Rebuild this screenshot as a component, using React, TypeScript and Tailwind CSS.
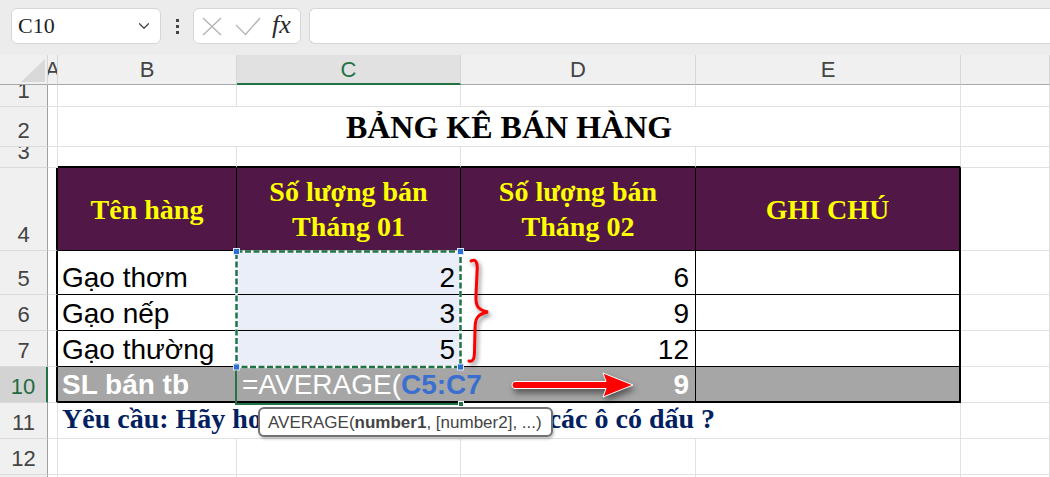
import { ChevronDown } from 'lucide-react'

const SANS = "font-['Liberation_Sans',Arial,sans-serif]"
const SERIF = "font-['Liberation_Serif','Times_New_Roman',serif]"

const COLS = 'grid grid-cols-[48px_10px_179px_224px_235px_265px_1fr]'

// cell styles
const GL = 'border-r border-b border-[#e1e1e1] bg-white'
const RH = `flex items-end justify-center pb-[4px] bg-[#f0f0f0] border-r border-r-[#a0a0a0] border-b border-b-[#dadada] text-[22px] leading-none text-[#444] overflow-hidden ${SANS}`
const RH_ACTIVE = `flex items-end justify-center pb-[4px] bg-[#d3d3d3] border-r-2 border-r-[#217346] border-b border-b-[#dadada] text-[22px] leading-none text-[#1e6b41] overflow-hidden ${SANS}`
const A_TBL = 'border-r-2 border-r-black border-b border-b-[#e1e1e1] bg-white'
const TOP_EDGE = 'border-r border-r-[#e1e1e1] border-b-2 border-b-black bg-white'
const HEAD = `flex flex-col items-center justify-center border-r border-b border-black bg-[#501747] text-[#ffff00] font-bold text-[28px] leading-[35px] ${SERIF}`
const HEAD_E = `flex flex-col items-center justify-center border-r-2 border-b border-black bg-[#501747] text-[#ffff00] font-bold text-[28px] leading-[35px] ${SERIF}`
const DATA = `flex items-end border-r border-b border-black bg-white text-[28px] leading-none pb-[2px] text-black whitespace-nowrap ${SANS}`
const DATA_SEL = `flex items-end justify-end border-r border-b border-black bg-[#e9eef8] text-[28px] leading-none pb-[2px] pr-[5px] text-black ${SANS}`
const DATA_E = 'border-r-2 border-b border-black bg-white'
const TOT = `flex items-end border-r border-b-2 border-black bg-[#a6a6a6] text-[28px] leading-none pb-[2px] text-white font-bold whitespace-nowrap ${SANS}`
const TOT_E = 'border-r-2 border-b-2 border-black bg-[#a6a6a6]'

function Blank({ n }: { n: number }) {
  return (
    <>
      {Array.from({ length: n }).map((_, i) => (
        <div key={i} className={GL} />
      ))}
    </>
  )
}

function TopBar() {
  return (
    <div className="h-[55px] bg-[#ececec] flex items-start pt-[8px] pl-[11px]">
      <div className="w-[150px] h-[36px] bg-white rounded-[6px] border border-[#d6d6d6] flex items-center justify-between pl-[6px] pr-[7px]">
        <span className={`${SERIF} text-[22px] text-[#222] leading-none`}>C10</span>
        <ChevronDown size={18} strokeWidth={1.6} className="text-[#444]" />
      </div>
      <div className="w-[32px] h-[36px] flex flex-col items-center justify-center gap-[3px]">
        <span className="w-[3px] h-[3px] bg-[#444]" />
        <span className="w-[3px] h-[3px] bg-[#444]" />
        <span className="w-[3px] h-[3px] bg-[#444]" />
      </div>
      <div className="w-[108px] h-[36px] bg-white rounded-[6px] border border-[#d6d6d6] flex items-center pl-[8px]">
        <svg width="20" height="19" viewBox="0 0 20 19" className="shrink-0">
          <path d="M1 1 L19 18 M19 1 L1 18" stroke="#b5b5b5" strokeWidth="1.4" fill="none" />
        </svg>
        <svg width="26" height="19" viewBox="0 0 26 19" className="ml-[13px] shrink-0">
          <path d="M1 8 L10.5 17.5 L25 1" stroke="#b5b5b5" strokeWidth="1.4" fill="none" />
        </svg>
        <span className={`${SERIF} italic text-[26px] leading-none text-[#2a2a2a] ml-[11px] pb-[3px]`}>fx</span>
      </div>
      <div className="ml-[8px] flex-1 h-[36px] bg-white rounded-l-[6px] border border-r-0 border-[#d6d6d6]" />
    </div>
  )
}

function ColHeaders() {
  const base = `flex items-center justify-center bg-[#f0f0f0] border-r border-r-[#d6d6d6] border-b border-b-[#a8a8a8] text-[22px] text-[#444] overflow-hidden ${SANS}`
  return (
    <>
      <div className="relative bg-[#f0f0f0] border-r border-r-[#d6d6d6] border-b border-b-[#a8a8a8]">
        <svg width="24" height="23" viewBox="0 0 24 23" className="absolute right-[2px] bottom-[2px]">
          <polygon points="24,0 24,23 0,23" fill="#d9d9d9" />
        </svg>
      </div>
      <div className={base}>A</div>
      <div className={base}>B</div>
      <div className={`flex items-center justify-center bg-[#e1e1e1] border-r border-r-[#d6d6d6] border-b-2 border-b-[#217346] text-[22px] text-[#217346] ${SANS}`}>C</div>
      <div className={base}>D</div>
      <div className={base}>E</div>
      <div className={base} />
    </>
  )
}

export default function App() {
  return (
    <div className="relative w-[1050px] h-[477px] overflow-hidden bg-white">
      <TopBar />
      <div className={`${COLS} grid-rows-[30px_22px_40px_21px_83px_44px_36px_36px_36px_36px_36px_20px]`}>
        <ColHeaders />

        {/* row 1 */}
        <div className={RH}>1</div>
        <Blank n={6} />

        {/* row 2 - title */}
        <div className={RH}>2</div>
        <div className={GL} />
        <div className={`col-span-4 flex items-end justify-center pb-[3px] border-r border-b border-[#e1e1e1] bg-white text-[32px] leading-none font-bold text-black ${SERIF}`}>
          BẢNG KÊ BÁN HÀNG
        </div>
        <div className={GL} />

        {/* row 3 */}
        <div className={RH}>3</div>
        <div className={GL} />
        <div className={TOP_EDGE} />
        <div className={TOP_EDGE} />
        <div className={TOP_EDGE} />
        <div className={TOP_EDGE} />
        <div className={GL} />

        {/* row 4 - headers */}
        <div className={RH}>4</div>
        <div className={A_TBL} />
        <div className={HEAD}>Tên hàng</div>
        <div className={HEAD}>
          <span>Số lượng bán</span>
          <span>Tháng 01</span>
        </div>
        <div className={HEAD}>
          <span>Số lượng bán</span>
          <span>Tháng 02</span>
        </div>
        <div className={HEAD_E}>GHI CHÚ</div>
        <div className={GL} />

        {/* rows 5-7 */}
        {[
          ['5', 'Gạo thơm', '2', '6'],
          ['6', 'Gạo nếp', '3', '9'],
          ['7', 'Gạo thường', '5', '12'],
        ].map(([n, name, m1, m2]) => (
          <div key={n} className="contents">
            <div className={RH}>{n}</div>
            <div className={A_TBL} />
            <div className={`${DATA} pl-[4px]`}>{name}</div>
            <div className={DATA_SEL}>{m1}</div>
            <div className={`${DATA} justify-end pr-[6px]`}>{m2}</div>
            <div className={DATA_E} />
            <div className={GL} />
          </div>
        ))}

        {/* row 10 - average */}
        <div className={RH_ACTIVE}>10</div>
        <div className={A_TBL} />
        <div className={`${TOT} pl-[4px]`}>SL bán tb</div>
        <div className={`relative z-10 flex items-end border-b-2 border-black bg-[#a6a6a6] text-[28px] leading-none pb-[2px] pl-[5px] text-white whitespace-nowrap ${SANS}`}>
          <span>=AVERAGE(</span>
          <span className="font-bold text-[#3a6fd0]">C5:C7</span>
          <span className="self-center ml-[3px] w-px h-[32px] bg-[#6b6b6b]" />
        </div>
        <div className={`${TOT} justify-end pr-[6px]`}>9</div>
        <div className={TOT_E} />
        <div className={GL} />

        {/* row 11 */}
        <div className={RH}>11</div>
        <div className={GL} />
        <div className={`col-span-4 flex items-end pl-[4px] pb-[5px] border-r border-b border-[#e1e1e1] bg-white text-[28px] leading-none font-bold text-[#002060] whitespace-nowrap ${SERIF}`}>
          Yêu cầu: Hãy hoàn thành công thức cho các ô có dấu ?
        </div>
        <div className={GL} />

        {/* row 12 */}
        <div className={RH}>12</div>
        <Blank n={6} />

        {/* row 13 (cut off by the window) */}
        <div className={RH} />
        <Blank n={6} />
      </div>

      {/* active cell border C10 */}
      <div className="absolute left-[235px] top-[366px] w-[227px] h-[39px] border-l-2 border-b-2 border-[#217346] z-[15]" />
      <div className="absolute left-[458px] top-[401px] w-[6px] h-[6px] bg-[#217346] border border-white z-20" />

      {/* copy marquee C5:C7 */}
      <svg className="absolute left-[230px] top-[245px] z-20" width="236" height="128" viewBox="0 0 236 128">
        <rect x="6.5" y="6.5" width="224" height="115.5" fill="none" stroke="#ffffff" strokeWidth="2.5" />
        <rect x="6.5" y="6.5" width="224" height="115.5" fill="none" stroke="#217346" strokeWidth="2.5" strokeDasharray="6 2.5" />
        <rect x="3.5" y="3.5" width="6" height="6" fill="#2f6fd1" stroke="#dbe6f7" strokeWidth="1" />
        <rect x="227.5" y="3.5" width="6" height="6" fill="#2f6fd1" stroke="#dbe6f7" strokeWidth="1" />
        <rect x="3.5" y="119" width="6" height="6" fill="#2f6fd1" stroke="#dbe6f7" strokeWidth="1" />
        <rect x="227.5" y="119" width="6" height="6" fill="#2f6fd1" stroke="#dbe6f7" strokeWidth="1" />
      </svg>

      {/* red brace */}
      <svg className="absolute left-[462px] top-[255px] z-20 drop-shadow-[2px_3px_2px_rgba(0,0,0,0.45)]" width="36" height="112" viewBox="0 0 36 112">
        <path
          d="M9 6 C14 3 16 8 15 18 L14 40 C13.5 50 15 55 26 57 C15 59 13 64 13 74 L12.5 96 C12.5 104 11 107 7 106"
          fill="none"
          stroke="#ff0000"
          strokeWidth="3"
          strokeLinecap="round"
        />
      </svg>

      {/* red arrow */}
      <svg className="absolute left-[505px] top-[368px] z-20 drop-shadow-[2px_4px_3px_rgba(0,0,0,0.5)]" width="135" height="34" viewBox="0 0 135 34">
        <path
          d="M10 13.5 L101 13.5 L98 5 L128 17 L98 29 L101 20.5 L10 20.5 Q7 20.5 7 17 Q7 13.5 10 13.5 Z"
          fill="#ff0000"
          stroke="#ffffff"
          strokeWidth="1"
        />
      </svg>

      {/* function tooltip */}
      <div className={`absolute left-[258px] top-[407px] w-[295px] h-[30px] z-30 bg-white border-2 border-[#727272] rounded-[6px] shadow-[1px_2px_3px_rgba(0,0,0,0.25)] flex items-center pl-[8px] text-[17px] leading-none text-[#444] whitespace-nowrap ${SANS}`}>
        AVERAGE(<span className="font-bold">number1</span>, [number2], ...)
      </div>
    </div>
  )
}
